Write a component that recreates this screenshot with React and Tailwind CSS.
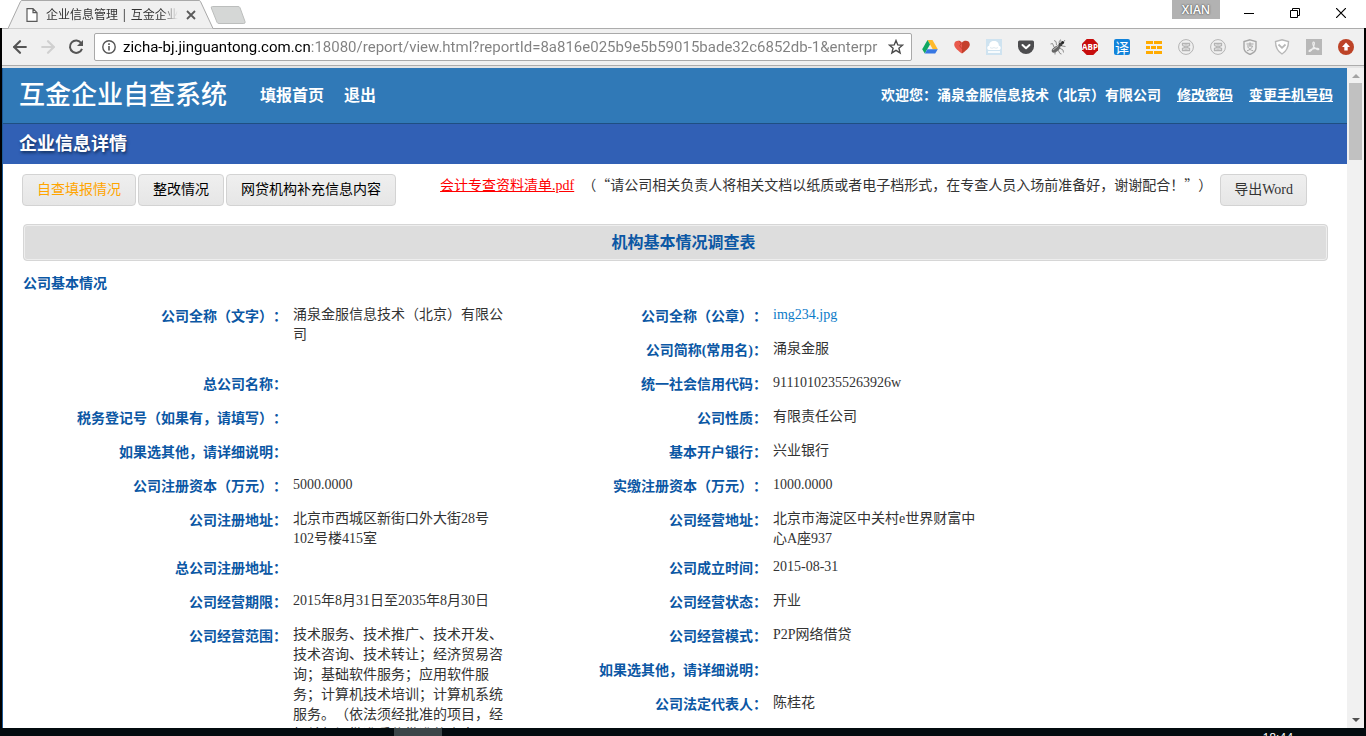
import React, { useState } from "react";
import { ArrowLeft, ArrowRight } from "lucide-react";

const ADDRESS =
  "zicha-bj.jinguantong.com.cn:18080/report/view.html?reportId=8a816e025b9e5b59015bade32c6852db-1&enterpr";

const tabs = ["自查填报情况", "整改情况", "网贷机构补充信息内容"];

const fields = [
  { label: "公司全称（文字）：", value: "涌泉金服信息技术（北京）有限公司", span: "row-span-2" },
  { label: "公司全称（公章）：", value: "img234.jpg", link: true },
  { label: "公司简称(常用名)：", value: "涌泉金服" },
  { label: "总公司名称：", value: "" },
  { label: "统一社会信用代码：", value: "91110102355263926w" },
  { label: "税务登记号（如果有，请填写）：", value: "" },
  { label: "公司性质：", value: "有限责任公司" },
  { label: "如果选其他，请详细说明：", value: "" },
  { label: "基本开户银行：", value: "兴业银行" },
  { label: "公司注册资本（万元）：", value: "5000.0000" },
  { label: "实缴注册资本（万元）：", value: "1000.0000" },
  { label: "公司注册地址：", value: "北京市西城区新街口外大街28号102号楼415室" },
  { label: "公司经营地址：", value: "北京市海淀区中关村e世界财富中心A座937" },
  { label: "总公司注册地址：", value: "" },
  { label: "公司成立时间：", value: "2015-08-31" },
  { label: "公司经营期限：", value: "2015年8月31日至2035年8月30日" },
  { label: "公司经营状态：", value: "开业" },
  {
    label: "公司经营范围：",
    value:
      "技术服务、技术推广、技术开发、技术咨询、技术转让；经济贸易咨询；基础软件服务；应用软件服务；计算机技术培训；计算机系统服务。（依法须经批准的项目，经相关部门批准后依批准的内容开展经营活动。）",
    span: "row-span-5",
  },
  { label: "公司经营模式：", value: "P2P网络借贷" },
  { label: "如果选其他，请详细说明：", value: "" },
  { label: "公司法定代表人：", value: "陈桂花" },
];

const DriveIcon = () => (
  <svg viewBox="0 0 16 16" className="size-4">
    <path d="M5.5 1h5l5.3 9.2h-5z" fill="#ffba2c" />
    <path d="M5.5 1 8 5.4 2.8 14.6.2 10.2z" fill="#11a861" />
    <path d="M5.4 10.2h10.4l-2.6 4.4H2.8z" fill="#3777e3" />
  </svg>
);

const HeartIcon = () => (
  <svg viewBox="0 0 16 16" className="size-4">
    <path d="M8 3.6C6.4 1 0.4 0.8 0.2 5.4 0.1 9 5 12 8 14.6z" fill="#e9594c" />
    <path d="M8 3.6C9.6 1 15.6 0.8 15.8 5.4 15.9 9 11 12 8 14.6z" fill="#c5402c" />
    <path d="m5.2 1.8 2 3-1.6 2 2.4 3" fill="none" stroke="#b93a2b" strokeWidth=".8" />
  </svg>
);

const CloudIcon = () => (
  <svg viewBox="0 0 16 16" className="size-4">
    <path d="M0 0h16v16H0z" fill="#cfe3f0" />
    <path d="M2.5 11C.6 10 1 7 3.2 6.8 3 4 5 2 8 2s5 2 4.8 4.8C15 7 15.4 10 13.5 11z" fill="#fff" />
    <path d="M2 12h12v2H2z" fill="#f7fbfd" />
    <path d="M4 8.500c1.300.9 2.600.9 4 0 1.400.9 2.700.9 4 0" fill="none" stroke="#d5e2ea" strokeWidth=".8" />
  </svg>
);

const PocketIcon = () => (
  <svg viewBox="0 0 16 16" className="size-4">
    <path d="M1.500 1.500h13Q16 1.500 16 3v4.500a8 7.500 0 0 1-16 0V3Q0 1.500 1.500 1.500z" fill="#4d4d4f" />
    <path d="m4.500 6 3.500 3.300L11.500 6" fill="none" stroke="#fff" strokeWidth="2" strokeLinecap="round" strokeLinejoin="round" />
  </svg>
);

const BugIcon = () => (
  <svg viewBox="0 0 16 16" className="size-4">
    <ellipse cx="6" cy="10" rx="5" ry="2.500" transform="rotate(-38 6 10)" fill="#666" />
    <circle cx="10.500" cy="5.500" r="2" fill="#444" />
    <circle cx="12.600" cy="3.600" r="1.500" fill="#222" />
    <path
      d="M4 8 2.500 4.500.500 5M6.500 6 6 2.500 4 1.500M9 4l.5-2.500M8 11l2 3.500 1.500.5M9.500 9l3.500 2 .5 2.500M12 7l3.500.5M13.500 3l1.500-2M11 3l-.5-2.500M5 13v2.500"
      fill="none"
      stroke="#777"
      strokeWidth=".8"
    />
    <path d="m3 11 5-4" stroke="#bbb" />
  </svg>
);

const AbpIcon = () => (
  <svg viewBox="0 0 16 16" className="size-4">
    <path d="M4.700 0h6.600L16 4.700v6.600L11.300 16H4.700L0 11.300V4.700z" fill="#c70d0d" />
    <text x="8" y="11" textAnchor="middle" fontSize="8" fontWeight="700" fill="#fff" fontFamily="Open Sans, sans-serif">
      ABP
    </text>
  </svg>
);

const TranslateIcon = () => (
  <span className="flex size-4 items-center justify-center rounded-xs bg-[#1283da] font-['Noto_Sans_CJK_SC',sans-serif] text-sm leading-4 text-white">
    译
  </span>
);

const BricksIcon = () => (
  <svg viewBox="0 0 16 16" className="size-4">
    <path d="M0 2h7v3H0zM8 2h8v3H8zM0 7h4v3H0zM5 7h5v3H5zM11 7h5v3h-5zM0 12h7v3H0zM8 12h8v3H8z" fill="#ffab00" />
  </svg>
);

const RingIcon = () => (
  <svg viewBox="0 0 16 16" className="size-4" fill="none" stroke="#b3b3b3">
    <circle cx="8" cy="8" r="7.400" />
    <path d="M4.500 6.500v-2h7v2L8 8 4.500 9.500v2h7v-2L8 8 4.500 6.500" strokeWidth="1.300" />
    <path d="M6.500 6h3M6.500 10h3" />
  </svg>
);

const ShieldPayIcon = () => (
  <svg viewBox="0 0 16 16" className="size-4" fill="none" stroke="#a6a6a6">
    <path d="M8 .8 14 2.500V9c0 3-2.500 5-6 6.500C4.500 14 2 12 2 9V2.500z" strokeWidth="1.400" />
    <path d="M4.500 5h7M8 3.300v3.500M5 7h5.500c-.7 2.500-2.800 4-5.500 4.800M5.800 8c1.500 2.200 3 3.300 5.400 3.800" />
  </svg>
);

const ShieldCheckIcon = () => (
  <svg viewBox="0 0 16 16" className="size-4" fill="none" stroke="#b8b8b8">
    <path d="M8 .8 14.500 2.500C14.500 8 12 12.500 8 15 4 12.500 1.500 8 1.500 2.500z" fill="#fff" strokeWidth="1.400" />
    <path d="m4.500 5.500 3.500 3.300 3.500-3.300" strokeWidth="1.800" />
  </svg>
);

const PdfIcon = () => (
  <svg viewBox="0 0 16 16" className="size-4">
    <path d="M0 0h16v16H0z" fill="#b8b8b8" />
    <path
      d="M7.500 3c1.500 0 .8 3 0 5S4.500 12.800 3.300 12.500c-1.200-.6 1.700-2.300 4.700-2.900s5-.2 4.900.8c-.3 1-3-.2-4.600-2S6.300 3 7.500 3z"
      fill="none"
      stroke="#f0f0f0"
      strokeWidth="1.100"
    />
  </svg>
);

const UpdateIcon = () => (
  <svg viewBox="0 0 16 16" className="size-4">
    <circle cx="8" cy="8" r="8" fill="#bd4327" />
    <path d="M8 3.500 12 8H9.700v3.500H6.300V8H4z" fill="#fff" />
  </svg>
);

const extensions = [
  { name: "Drive", Icon: DriveIcon },
  { name: "Heart", Icon: HeartIcon },
  { name: "Cloud", Icon: CloudIcon },
  { name: "Pocket", Icon: PocketIcon },
  { name: "Bug", Icon: BugIcon },
  { name: "ABP", Icon: AbpIcon },
  { name: "Translate", Icon: TranslateIcon },
  { name: "Bricks", Icon: BricksIcon },
  { name: "Ring 1", Icon: RingIcon },
  { name: "Ring 2", Icon: RingIcon },
  { name: "Pay shield", Icon: ShieldPayIcon },
  { name: "Check shield", Icon: ShieldCheckIcon },
  { name: "PDF", Icon: PdfIcon },
  { name: "Update", Icon: UpdateIcon },
];

const TabStrip = () => (
  <div className="flex h-7 shrink-0 items-start justify-between bg-white pl-2">
    <div className="flex">
      <div className="relative h-7 w-52">
        <svg viewBox="0 0 208 30" className="absolute top-0 left-0 h-[30px] w-52" fill="#f0f0f0" stroke="#a9a9a9">
          <path d="M0 28.500 12.500 1.500Q13 .5 14 .5H191q1 0 1.500 1L205 28.500" />
        </svg>
        <div className="relative flex h-7 items-center pt-0.5 pl-[18px]">
          <svg viewBox="0 0 12 14" className="mr-2 h-3.5 w-3 shrink-0" fill="#fff" stroke="#5a5a5a" strokeWidth="1.200">
            <path d="M1 .7h6l4 4v8.600H1zM7 .7v4h4" />
          </svg>
          <span className="w-[132px] overflow-hidden font-['Open_Sans','Noto_Sans_CJK_SC',sans-serif] text-xs whitespace-nowrap text-[#333] mask-r-from-88% mask-r-to-100%">
            企业信息管理 | 互金企业
          </span>
          <button type="button" aria-label="Close tab" className="ml-2">
            <svg viewBox="0 0 10 10" className="size-2.5" stroke="#5a5a5a" strokeWidth="1.800">
              <path d="m1 1 8 8M9 1 1 9" />
            </svg>
          </button>
        </div>
      </div>
      <button type="button" aria-label="New tab" className="mt-1.5 -ml-1.5 h-[18px]">
        <svg viewBox="0 0 36 18" className="h-[18px] w-9" fill="#d5d7d6" stroke="#bcbebd">
          <path d="M2.500.5h25.500q1.500 0 2 1.200l5 13.800q.6 2-1.200 2H9q-1.500 0-2-1.200L1.300 2Q.8.5 2.500.5z" />
        </svg>
      </button>
    </div>
    <div className="flex items-start">
      <span className="h-[19px] w-12 bg-[#b2b2b2] text-center font-['Open_Sans',sans-serif] text-xs leading-[19px] font-semibold text-white text-shadow-[0_0_2px_#222]">
        XIAN
      </span>
      <div className="ml-6 flex items-center gap-9 pt-2 pr-5">
        <button type="button" aria-label="Minimize">
          <svg viewBox="0 0 10 10" className="size-2.5" stroke="#000">
            <path d="M0 5.500h10" />
          </svg>
        </button>
        <button type="button" aria-label="Restore">
          <svg viewBox="0 0 10 10" className="size-2.5" fill="none" stroke="#000">
            <path d="M.5 2.500h7v7h-7zM2.500 2.500v-2h7v7h-2" />
          </svg>
        </button>
        <button type="button" aria-label="Close">
          <svg viewBox="0 0 10 10" className="size-2.5" stroke="#000" strokeWidth="1.200">
            <path d="m0 0 10 10M10 0 0 10" />
          </svg>
        </button>
      </div>
    </div>
  </div>
);

const Toolbar = () => {
  const [address, setAddress] = useState(ADDRESS);

  return (
    <div className="flex h-[38px] shrink-0 items-center border-t border-b border-[#acacac] bg-[#f0f0f0] pr-2.5 pl-2">
      <button type="button" aria-label="Back" className="text-[#555]">
        <ArrowLeft size={20} strokeWidth={2.6} />
      </button>
      <button type="button" aria-label="Forward" className="ml-2 text-[#d0d0d0]">
        <ArrowRight size={20} strokeWidth={2.6} />
      </button>
      <button type="button" aria-label="Reload" className="ml-2.5">
        <svg viewBox="0 0 16 16" className="size-4" fill="none" stroke="#555" strokeWidth="2">
          <path d="M13.300 4.200A6.200 6.200 0 1 0 14 9.800" />
          <path d="M15 1v6H9z" fill="#555" stroke="none" />
        </svg>
      </button>
      <div className="ml-2.5 flex h-7 min-w-0 flex-1 items-center rounded-xs border border-[#a9a9a9] bg-white px-[7px]">
        <svg viewBox="0 0 14 14" className="size-3.5 shrink-0" fill="none" stroke="#555" strokeWidth="1.400">
          <circle cx="7" cy="7" r="6.200" />
          <path d="M7 6v4.500M7 3.300V5" strokeWidth="1.600" />
        </svg>
        <input
          type="text"
          aria-label="Address"
          value={address}
          onChange={(e) => setAddress(e.target.value)}
          className="ml-[7px] h-6 min-w-0 flex-1 bg-[linear-gradient(to_right,#000_188px,#808080_188px)] bg-clip-text font-[Roboto,sans-serif] text-[15px] text-transparent outline-none"
        />
        <button type="button" aria-label="Bookmark" className="ml-1.5">
          <svg viewBox="0 0 16 16" className="size-4" fill="none" stroke="#4a4a4a" strokeWidth="1.400">
            <path d="m8 1.500 1.800 4.400 4.700.3-3.600 3 1.200 4.700L8 11.300l-4.100 2.600 1.200-4.700-3.600-3 4.700-.3z" />
          </svg>
        </button>
      </div>
      <div className="ml-2.5 flex items-center gap-4">
        {extensions.map(({ name, Icon }) => (
          <button key={name} type="button" aria-label={name}>
            <Icon />
          </button>
        ))}
      </div>
    </div>
  );
};

const Field = ({ label, value, link, span }) => (
  <div className={`flex min-h-[34px] pb-2 ${span || ""}`}>
    <dt className="w-[270px] shrink-0 pt-0.5 pr-1.5 text-right text-sm leading-5 font-bold text-[#0b57a4]">{label}</dt>
    <dd className="w-[212px] text-sm leading-5 text-[#333]">
      {link ? (
        <a href="#" className="text-[#0a7ac8]">
          {value}
        </a>
      ) : (
        value
      )}
    </dd>
  </div>
);

const ReportPage = () => {
  const [activeTab, setActiveTab] = useState(tabs[0]);

  return (
    <div className="min-w-0 flex-1 overflow-hidden border-l border-[#1d5a97] bg-white">
      <header className="flex h-14 items-center border-b border-[#1f4f82] bg-[#3079b7] pr-3.5 pl-4 font-bold text-white">
        <h1 className="font-['Liberation_Serif','Noto_Sans_CJK_SC',serif] text-[26px] font-medium">互金企业自查系统</h1>
        <nav className="ml-[33px] flex gap-5">
          <a href="#">填报首页</a>
          <a href="#">退出</a>
        </nav>
        <div className="ml-auto flex gap-4 text-sm">
          <span>欢迎您：涌泉金服信息技术（北京）有限公司</span>
          <a href="#" className="underline">
            修改密码
          </a>
          <a href="#" className="underline">
            变更手机号码
          </a>
        </div>
      </header>
      <div className="flex h-10 items-center bg-[#3160b5] px-4">
        <h2 className="text-lg font-bold text-white text-shadow-[1px_2px_3px_#12305f]">企业信息详情</h2>
      </div>

      <div className="flex items-start pt-2.5 pr-10 pl-[19px]">
        <div className="flex gap-0.5">
          {tabs.map((tab) => (
            <button
              key={tab}
              type="button"
              onClick={() => setActiveTab(tab)}
              className={`h-8 rounded-sm border border-[#d3d3d3] bg-linear-to-b from-[#efefef] to-[#e6e6e6] px-3.5 text-sm ${
                activeTab === tab ? "text-[#ffa500]" : "text-black"
              }`}
            >
              {tab}
            </button>
          ))}
        </div>
        <p className="ml-auto text-sm leading-5 whitespace-nowrap text-[#333]">
          <a href="#" className="mr-2 text-[#f00] underline">
            会计专查资料清单.pdf
          </a>
          <span className="font-['Noto_Sans_CJK_SC',sans-serif]">
            （“请公司相关负责人将相关文档以纸质或者电子档形式，在专查人员入场前准备好，谢谢配合！”）
          </span>
        </p>
        <button
          type="button"
          className="ml-2 h-8 rounded-sm border border-[#d3d3d3] bg-linear-to-b from-[#efefef] to-[#e6e6e6] px-[13px] text-sm text-[#333]"
        >
          导出Word
        </button>
      </div>

      <main className="pt-[18px] pr-[19px] pl-5">
        <h3 className="flex h-[37px] items-center justify-center rounded-sm border border-[#d6d6d6] bg-[#ddd] pl-4 font-bold text-[#0b57a4] inset-shadow-[0_0_0_1px_#eee]">
          机构基本情况调查表
        </h3>
        <h4 className="mt-[13px] text-sm leading-5 font-bold text-[#0b57a4]">公司基本情况</h4>
        <dl className="mt-[11px] grid grid-cols-[480px_480px]">
          {fields.map((field, i) => (
            <Field key={i} {...field} />
          ))}
        </dl>
      </main>
    </div>
  );
};

const Scrollbar = () => (
  <div className="flex w-[17px] shrink-0 flex-col items-center bg-[#f1f1f1] pt-1.5 pb-1.5">
    <svg viewBox="0 0 8 4" className="h-1 w-2 shrink-0" fill="#a3a3a3">
      <path d="M4 0 8 4H0z" />
    </svg>
    <div className="mt-[5px] h-[77px] w-[13px] bg-[#c1c1c1]" />
    <svg viewBox="0 0 8 4" className="mt-auto h-1 w-2 shrink-0" fill="#505050">
      <path d="M0 0h8L4 4z" />
    </svg>
  </div>
);

export default function App() {
  return (
    <div
      lang="zh-CN"
      className="flex h-screen flex-col overflow-hidden bg-[#030b0f] font-['Liberation_Serif','Noto_Sans_CJK_SC',serif] [text-spacing-trim:space-all]"
    >
      <TabStrip />
      <div className="flex min-h-0 flex-1 flex-col border-x-2 border-black">
        <Toolbar />
        <div className="h-0.5 shrink-0 bg-[#e4e4e4]" />
        <div className="flex min-h-0 flex-1">
          <ReportPage />
          <Scrollbar />
        </div>
      </div>
      {/* top edge of the taskbar */}
      <div className="flex h-2 shrink-0 items-start overflow-hidden pr-[73px] pl-[394px]">
        <div className="h-2 w-12 bg-[#3b4548]" />
        <span className="ml-auto pt-0.5 font-['Open_Sans',sans-serif] text-xs leading-4 text-white">18:44</span>
      </div>
    </div>
  );
}
